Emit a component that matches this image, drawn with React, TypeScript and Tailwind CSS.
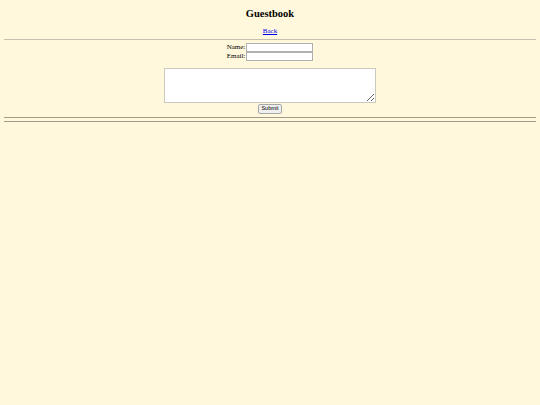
export default function App() {
  return (
    <div className="min-h-screen bg-[#fff8dc] px-[4px] font-['Liberation_Serif',serif] text-[7px] text-black">
      <h2 className="pt-[8px] text-center text-[10.5px] font-bold leading-[12px]">Guestbook</h2>
      <div className="mt-[7px] text-center leading-[8px]">
        <a href="#" className="text-[#0000ee] underline">
          Back
        </a>
      </div>
      <hr className="mt-[4px] border-0 border-t border-[#c5bfae]" />
      <form className="mt-[3px] flex flex-col items-center">
        <div className="flex items-center leading-[9px]">
          <span className="mr-[1px]">Name:</span>
          <input className="h-[9px] w-[67px] border border-[#b0b0b0] bg-white" />
        </div>
        <div className="flex items-center leading-[9px]">
          <span className="mr-[1px]">Email:</span>
          <input className="h-[9px] w-[67px] border border-[#b0b0b0] bg-white" />
        </div>
        <textarea className="mt-[7px] h-[35px] w-[212px] resize border border-[#cdc8bc] bg-white" />
        <button
          type="button"
          className="mt-[1px] flex h-[10px] w-[24px] items-center justify-center rounded-[2px] border border-[#a8a8a8] bg-[#efefef] font-['Liberation_Sans',sans-serif] text-[5.5px] leading-none"
        >
          Submit
        </button>
      </form>
      <hr className="mt-[3px] border-0 border-t border-[#a39c88]" />
      <hr className="mt-[3px] border-0 border-t border-[#a39c88]" />
    </div>
  )
}
